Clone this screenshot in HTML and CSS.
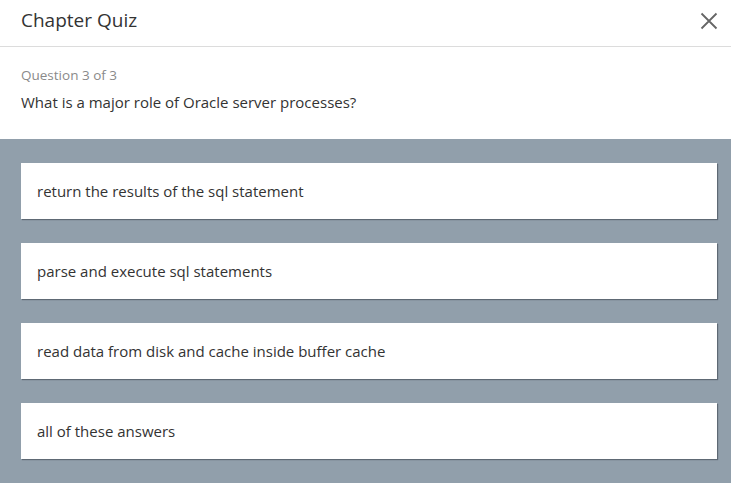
FILE: index.html
```html
<!DOCTYPE html>
<html>
<head>
<meta charset="utf-8">
<link rel="stylesheet" href="styles.css">
</head>
<body>
<div class="dialog">
  <header class="header">
    <h1 class="title">Chapter Quiz</h1>
    <button class="close" aria-label="Close">
      <svg width="18" height="18" viewBox="0 0 18 18"><path d="M1.5 1.5 L16.5 16.5 M16.5 1.5 L1.5 16.5" stroke="#666" stroke-width="1.8" fill="none"/></svg>
    </button>
  </header>
  <section class="question">
    <div class="counter">Question 3 of 3</div>
    <div class="prompt">What is a major role of Oracle server processes?</div>
  </section>
  <section class="answers">
    <div class="answer">return the results of the sql statement</div>
    <div class="answer">parse and execute sql statements</div>
    <div class="answer">read data from disk and cache inside buffer cache</div>
    <div class="answer">all of these answers</div>
  </section>
</div>
</body>
</html>
```
FILE: styles.css
```css
html, body {
  margin: 0;
  padding: 0;
  background: #fff;
}
body {
  font-family: "Open Sans", "Noto Sans", sans-serif;
  color: #333;
}
.dialog {
  width: 731px;
  height: 483px;
  display: flex;
  flex-direction: column;
  overflow: hidden;
}
.header {
  height: 47px;
  border-bottom: 1px solid #dcdcdc;
  display: flex;
  align-items: center;
  justify-content: space-between;
  padding: 0 13px 0 21px;
  box-sizing: border-box;
}
.title {
  margin: 0;
  font-size: 19px;
  font-weight: 400;
  color: #333;
  padding-bottom: 7px;
}
.close {
  border: 0;
  background: none;
  padding: 0;
  width: 18px;
  height: 18px;
  display: flex;
  margin-bottom: 5px;
}
.question {
  padding: 20px 21px 0;
  height: 72px;
}
.counter {
  font-size: 13.5px;
  color: #8a8a8a;
  line-height: 16px;
}
.prompt {
  margin-top: 9px;
  font-size: 15px;
  line-height: 20px;
  color: #333;
}
.answers {
  flex: 1;
  background: #919fab;
  padding: 24px 14px 0 21px;
  display: flex;
  flex-direction: column;
  gap: 24px;
}
.answer {
  height: 56px;
  flex-shrink: 0;
  background: #fff;
  box-shadow: 1px 1px 1px rgba(60, 70, 80, 0.6);
  display: flex;
  align-items: center;
  padding: 0 16px;
  font-size: 15px;
  color: #333;
}
```
